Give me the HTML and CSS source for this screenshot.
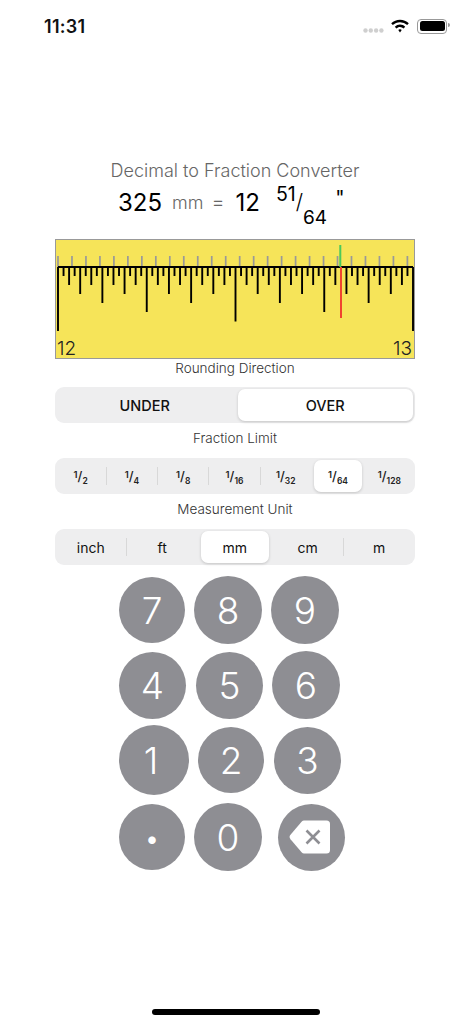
FILE: index.html
```html
<!DOCTYPE html>
<html lang="en">
<head>
    <meta charset="UTF-8">
    <meta name="viewport" content="width=device-width, initial-scale=1.0">
    <title>Decimal to Fraction Converter</title>
    <link rel="stylesheet" href="styles.css">
</head>
<body>
<div class="status-bar">
    <span class="status-time">11:31</span>
    <div class="status-icons">
        <svg class="signal-dots" width="21" height="5" viewBox="0 0 21 5">
            <circle cx="2.5" cy="2.5" r="2.2"/><circle cx="7.8" cy="2.5" r="2.2"/><circle cx="13.1" cy="2.5" r="2.2"/><circle cx="18.4" cy="2.5" r="2.2"/>
        </svg>
        <svg class="wifi-icon" width="18" height="14" viewBox="0 0 18 14">
            <path d="M9 10.2a2 2 0 0 1 1.7.9L9 13.6l-1.7-2.5a2 2 0 0 1 1.7-.9z"/>
            <path d="M9 5.6c2 0 3.9.8 5.2 2.1l-1.6 1.8A5.2 5.2 0 0 0 9 8c-1.4 0-2.7.6-3.6 1.5L3.8 7.7A7.4 7.4 0 0 1 9 5.6z"/>
            <path d="M9 .8c3.4 0 6.5 1.3 8.8 3.5l-1.6 1.8A10.2 10.2 0 0 0 9 3.2c-2.8 0-5.3 1.1-7.2 2.9L.2 4.3A12.8 12.8 0 0 1 9 .8z"/>
        </svg>
        <div class="battery"><div class="battery-level"></div></div>
    </div>
</div>

<main class="converter">
    <h1 class="title">Decimal to Fraction Converter</h1>
    <div class="result">
        <span class="result-value">325</span>
        <span class="result-unit">mm</span>
        <span class="result-equals">=</span>
        <span class="result-whole">12</span>
        <span class="result-fraction"><span class="frac-top">51</span><span class="frac-slash">/</span><span class="frac-bottom">64</span></span>
        <span class="result-inch">"</span>
    </div>

    <div class="ruler">
        <svg class="ruler-ticks" width="359" height="118" viewBox="0 0 359 118">
            <g transform="translate(2 0) scale(13.976 1)" class="ticks-mm">
                <path d="M0 16V27M1 16V27M2 16V27M3 16V27M4 16V27M5 16V27M6 16V27M7 16V27M8 16V27M9 16V27M10 16V27M11 16V27M12 16V27M13 16V27M14 16V27M15 16V27M16 16V27M17 16V27M18 16V27M19 16V27M20 16V27M21 16V27M22 16V27M23 16V27M24 16V27M25 16V27"/>
            </g>
            <g transform="translate(2 0) scale(5.547 1)" class="ticks-inch">
                <path d="M0 27H64"/>
                <path d="M1 27V36M3 27V36M5 27V36M7 27V36M9 27V36M11 27V36M13 27V36M15 27V36M17 27V36M19 27V36M21 27V36M23 27V36M25 27V36M27 27V36M29 27V36M31 27V36M33 27V36M35 27V36M37 27V36M39 27V36M41 27V36M43 27V36M45 27V36M47 27V36M49 27V36M53 27V36M55 27V36M57 27V36M59 27V36M61 27V36M63 27V36"/>
                <path d="M2 27V45M6 27V45M10 27V45M14 27V45M18 27V45M22 27V45M26 27V45M30 27V45M34 27V45M38 27V45M42 27V45M46 27V45M50 27V45M54 27V45M58 27V45M62 27V45"/>
                <path d="M4 27V54M12 27V54M20 27V54M28 27V54M36 27V54M44 27V54M52 27V54M60 27V54"/>
                <path d="M8 27V63M24 27V63M40 27V63M56 27V63"/>
                <path d="M16 27V72M48 27V72"/>
                <path d="M32 27V81.5"/>
                <path d="M0 27V91M64 27V91"/>
            </g>
            <rect class="marker-green" x="283.3" y="5" width="2" height="22"/>
            <rect class="marker-red" x="284" y="27" width="2" height="51"/>
        </svg>
        <span class="ruler-label ruler-label-left">12</span>
        <span class="ruler-label ruler-label-right">13</span>
    </div>

    <div class="section-label label-rounding">Rounding Direction</div>
    <div class="segments segments-tall">
        <div class="segment segment-text">UNDER</div>
        <div class="segment segment-text selected">OVER</div>
    </div>

    <div class="section-label">Fraction Limit</div>
    <div class="segments">
        <div class="segment divided"><span class="frac"><sup>1</sup>/<sub>2</sub></span></div>
        <div class="segment divided"><span class="frac"><sup>1</sup>/<sub>4</sub></span></div>
        <div class="segment divided"><span class="frac"><sup>1</sup>/<sub>8</sub></span></div>
        <div class="segment divided"><span class="frac"><sup>1</sup>/<sub>16</sub></span></div>
        <div class="segment"><span class="frac"><sup>1</sup>/<sub>32</sub></span></div>
        <div class="segment selected"><span class="frac"><sup>1</sup>/<sub>64</sub></span></div>
        <div class="segment"><span class="frac"><sup>1</sup>/<sub>128</sub></span></div>
    </div>

    <div class="section-label">Measurement Unit</div>
    <div class="segments">
        <div class="segment segment-unit divided">inch</div>
        <div class="segment segment-unit">ft</div>
        <div class="segment segment-unit selected">mm</div>
        <div class="segment segment-unit divided">cm</div>
        <div class="segment segment-unit">m</div>
    </div>

    <div class="keypad">
        <div class="key-row">
            <button class="key key-66">7</button>
            <button class="key key-68">8</button>
            <button class="key key-68">9</button>
        </div>
        <div class="key-row">
            <button class="key key-67">4</button>
            <button class="key key-67 key-shift">5</button>
            <button class="key key-68">6</button>
        </div>
        <div class="key-row key-row-wide">
            <button class="key key-70">1</button>
            <button class="key key-66">2</button>
            <button class="key key-67 key-shift">3</button>
        </div>
        <div class="key-row">
            <button class="key key-66 key-dot">•</button>
            <button class="key key-68">0</button>
            <button class="key key-67 key-back" title="Delete">
                <svg width="42" height="36" viewBox="0 0 42 36">
                    <path fill="#fff" d="M15 1.5H37.5a3.5 3.5 0 0 1 3.5 3.5V31a3.5 3.5 0 0 1-3.5 3.5H15a3 3 0 0 1-2.2-1L1.5 20.2a3.4 3.4 0 0 1 0-4.4L12.8 2.5a3 3 0 0 1 2.2-1z"/>
                    <path stroke="#8e8e93" stroke-width="2.6" fill="none" d="M17.5 11.5l13 13M30.5 11.5l-13 13"/>
                </svg>
            </button>
        </div>
    </div>
</main>

<div class="home-indicator"></div>
</body>
</html>
```

FILE: styles.css
```css
body {
    font-family: Inter, "Liberation Sans", sans-serif;
    margin: 0;
    background-color: #fff;
    color: #000;
    height: 1024px;
    overflow: hidden;
}
.status-bar {
    display: flex;
    justify-content: space-between;
    align-items: center;
    height: 52px;
    padding-left: 44px;
    padding-right: 24px;
}
.status-time {
    font-size: 18px;
    letter-spacing: 0.3px;
    font-weight: 600;
    color: #111;
}
.status-icons {
    display: flex;
    align-items: center;
}
.signal-dots { fill: #cfcfcf; margin-top: 9px; margin-right: 7px; }
.wifi-icon { fill: #000; margin-right: 8px; }
.battery {
    width: 25px;
    height: 10px;
    padding: 1.5px;
    border: 1px solid #999;
    border-radius: 4px;
    position: relative;
}
.battery::after {
    content: "";
    position: absolute;
    right: -3.5px;
    top: 3.5px;
    width: 1.5px;
    height: 4px;
    background-color: #999;
    border-radius: 0 2px 2px 0;
}
.battery-level {
    height: 100%;
    background-color: #000;
    border-radius: 2.5px;
}
.converter {
    padding-left: 55px;
    padding-right: 56px;
}
.title {
    margin: 108px 0 0;
    font-size: 18px;
    font-weight: 300;
    line-height: 22px;
    color: #666;
    text-align: center;
}
.result {
    display: flex;
    align-items: baseline;
    height: 57px;
    margin-top: 0;
    padding-left: 63px;
}
.result-value { font-size: 24px; line-height: 36px; font-weight: 400; }
.result-unit { font-size: 18px; font-weight: 300; color: #666; margin-left: 10px; transform: translateY(-2px); }
.result-equals { font-size: 20px; font-weight: 300; color: #666; margin-left: 8px; transform: translateY(-2px); }
.result-whole { font-size: 24px; margin-left: 11px; }
.result-fraction { font-size: 19.5px; margin-left: 16px; white-space: nowrap; }
.frac-top { vertical-align: 10px; }
.frac-slash { font-size: 21px; font-weight: 300; vertical-align: 2px; }
.frac-bottom { font-size: 19px; vertical-align: -12.5px; }
.result-inch { font-size: 20px; margin-left: 8px; margin-top: 3px; align-self: flex-start; line-height: 26px; }
.ruler {
    height: 118px;
    border: 1px solid #999;
    background-color: #f6e459;
    position: relative;
}
.ruler-ticks { display: block; }
.ticks-mm path {
    stroke: #999;
    stroke-width: 1.7;
    fill: none;
    vector-effect: non-scaling-stroke;
}
.ticks-inch path {
    stroke: #000;
    stroke-width: 1.9;
    fill: none;
    vector-effect: non-scaling-stroke;
}
.marker-green { fill: #4bc95b; }
.marker-red { fill: #f0442f; }
.ruler-label {
    position: absolute;
    bottom: -2px;
    font-size: 19px;
    font-weight: 300;
    line-height: 22px;
    color: #222;
}
.ruler-label-left { left: 1px; }
.ruler-label-right { right: 2px; }
.section-label {
    font-size: 13.5px;
    font-weight: 300;
    line-height: 18px;
    color: #333;
    text-align: center;
    margin-top: 6px;
    margin-bottom: 11px;
}
.label-rounding { margin-top: 0; margin-bottom: 10px; }
.segments {
    display: flex;
    height: 36px;
    background-color: #eeeeef;
    border-radius: 9px;
}
.segment {
    flex: 1;
    display: flex;
    align-items: center;
    justify-content: center;
    margin: 2px;
    border-radius: 7px;
    position: relative;
    color: #111;
}
.segment.divided::after {
    content: "";
    position: absolute;
    right: -2.5px;
    top: 7px;
    bottom: 7px;
    width: 1px;
    background-color: #d8d8d8;
}
.selected {
    background-color: #fff;
    box-shadow: 0 1px 3px rgba(0,0,0,0.18);
    margin-left: 3px;
}
.segment-text { font-size: 14.5px; font-weight: 500; }
.segment-unit { font-size: 14px; font-weight: 400; }
.segment-unit.selected { margin-right: 3.5px; }
.frac { font-size: 13px; font-weight: 500; color: #222; }
.frac sup { font-size: 9.5px; font-weight: 600; vertical-align: 3px; line-height: 0; }
.frac sub { font-size: 8.5px; font-weight: 600; vertical-align: -3px; line-height: 0; }
.keypad {
    padding-left: 64px;
    margin-top: 10px;
}
.key-row {
    display: flex;
    align-items: center;
    gap: 9px;
    height: 70px;
    margin-bottom: 5px;
}
.key-row-wide { margin-bottom: 7px; }
.key {
    border: none;
    border-radius: 50%;
    padding: 0;
    background-color: #8e8e93;
    color: #fff;
    font-family: Inter, "Liberation Sans", sans-serif;
    font-size: 37px;
    font-weight: 300;
    display: flex;
    align-items: center;
    justify-content: center;
    flex: none;
}
.key-66 { width: 66px; height: 66px; }
.key-67 { width: 67px; height: 67px; }
.key-68 { width: 68px; height: 68px; }
.key-70 { width: 70px; height: 70px; padding-right: 6px; }
.key-shift { margin-left: 1px; }
.key-back { margin-left: 7px; }
.key-back svg { display: block; margin-right: 3px; }
.key-dot { font-size: 24px; font-weight: 400; padding-top: 2px; }
.home-indicator {
    position: absolute;
    left: 152px;
    top: 1008.5px;
    width: 168px;
    height: 6px;
    border-radius: 3px;
    background-color: #000;
}
```
